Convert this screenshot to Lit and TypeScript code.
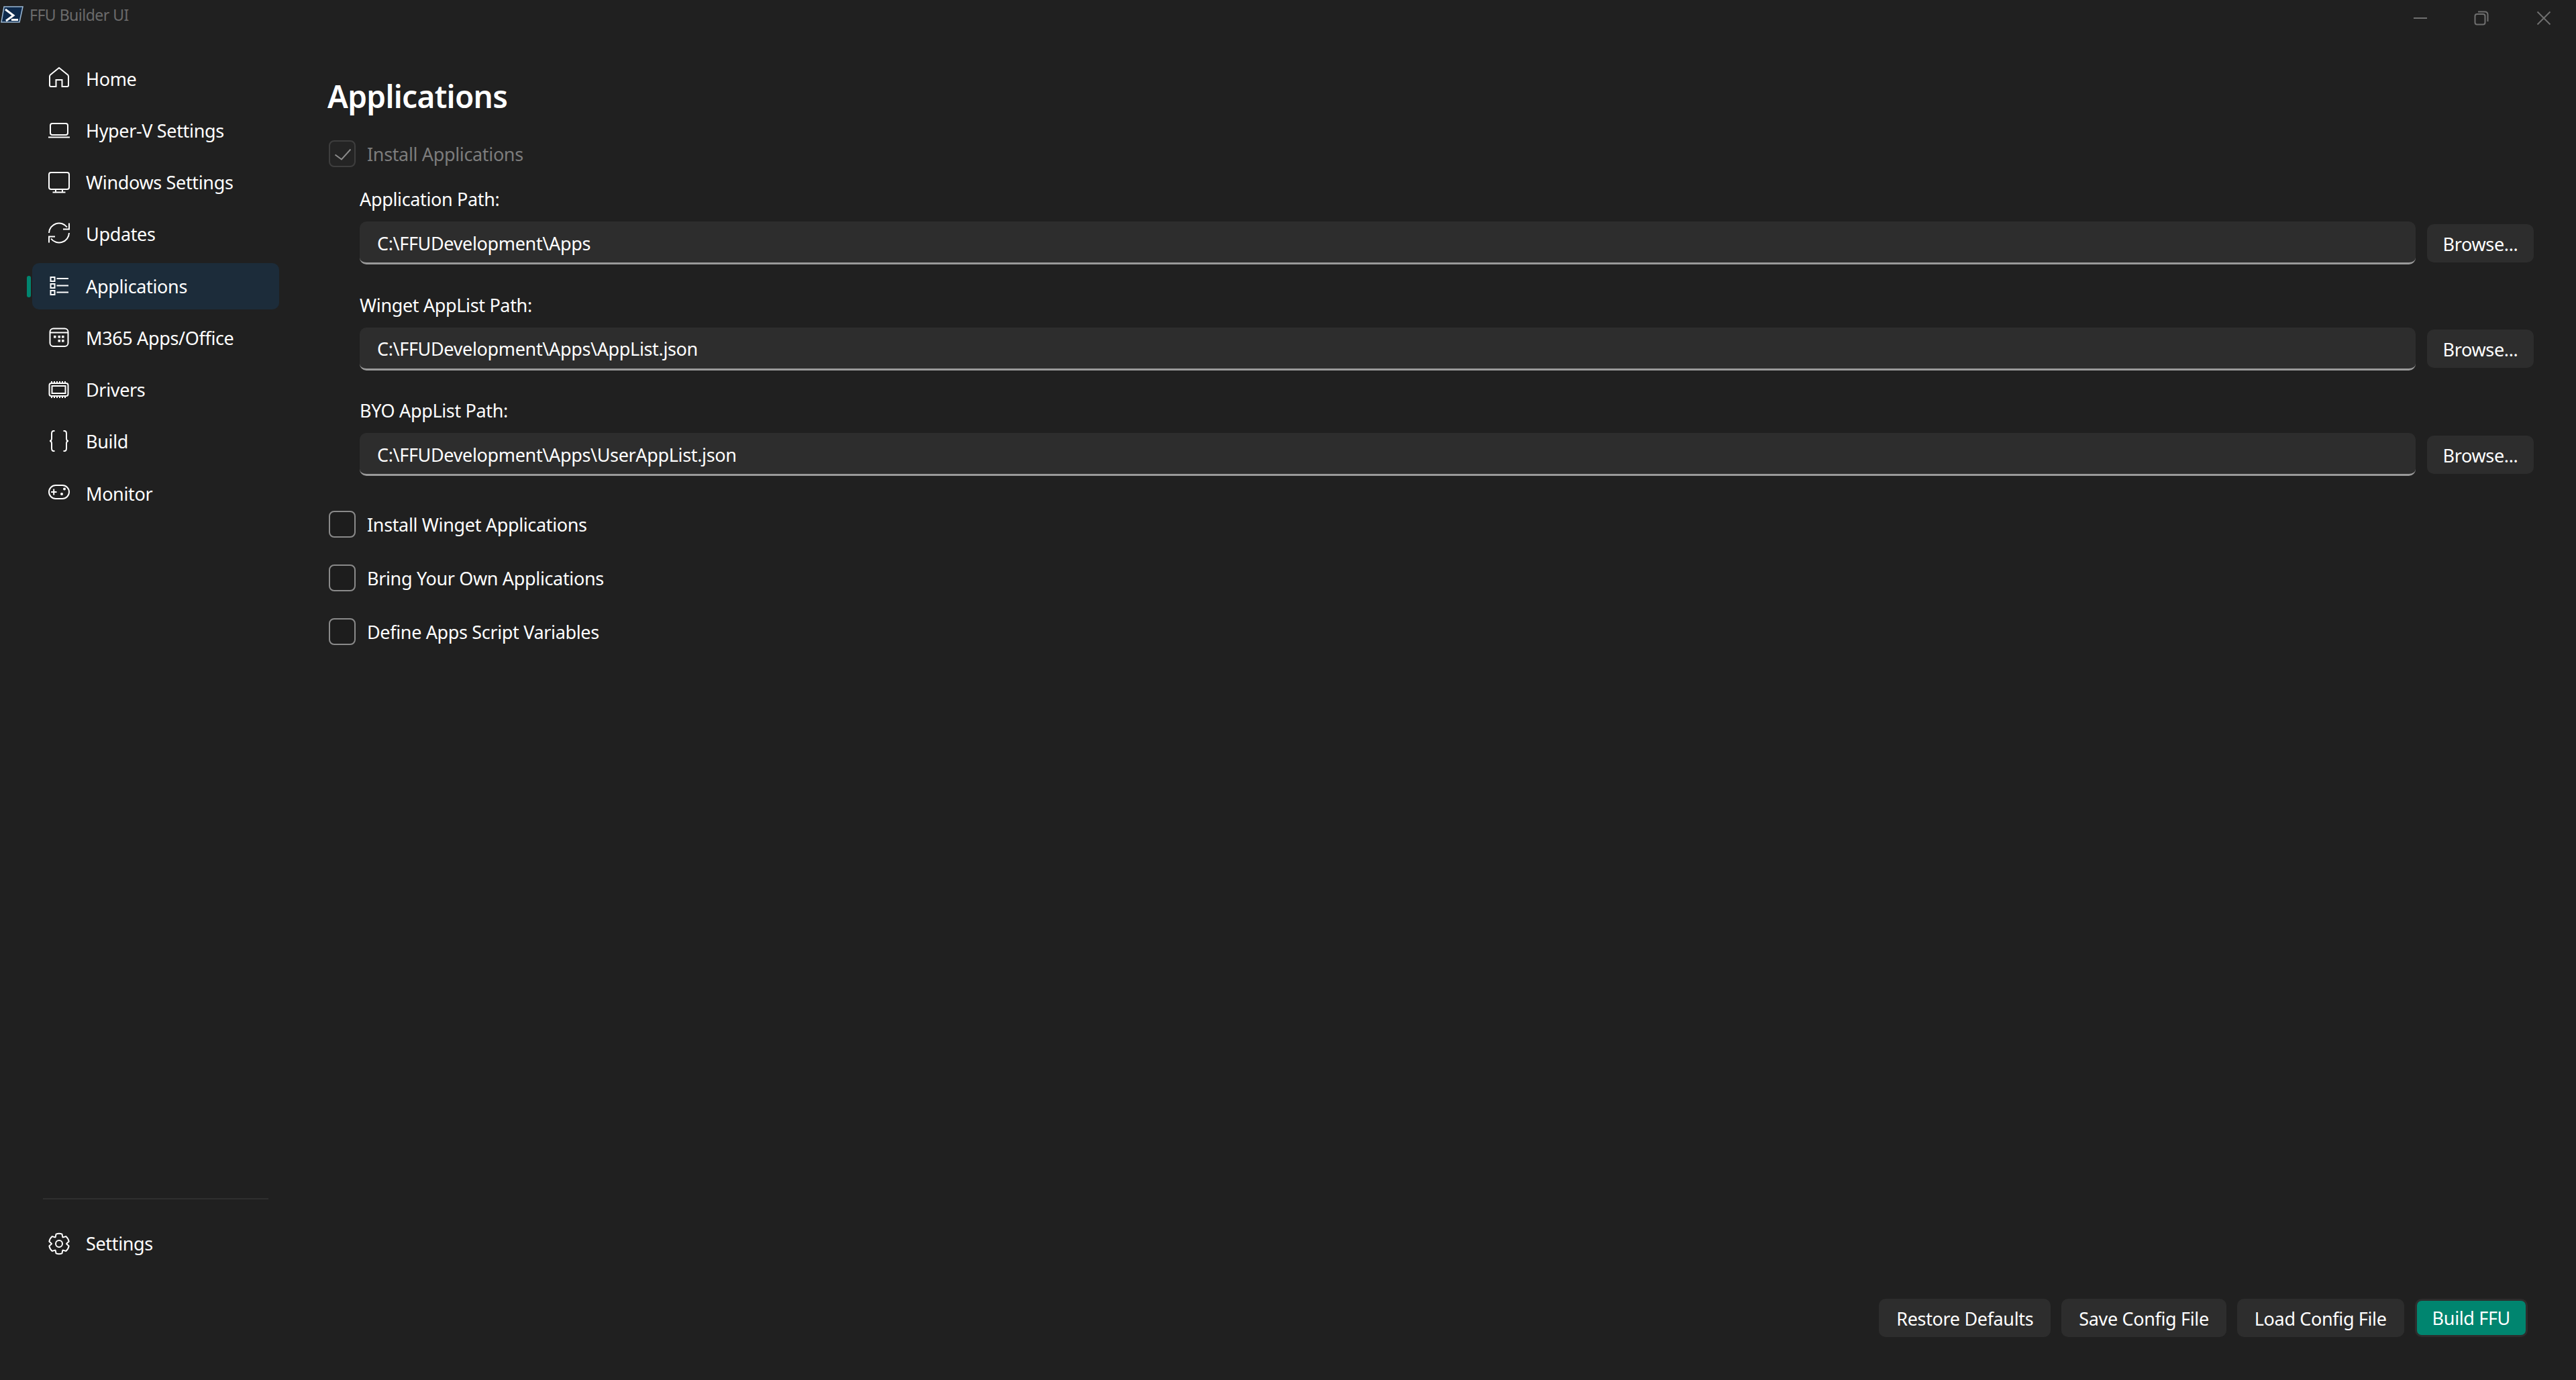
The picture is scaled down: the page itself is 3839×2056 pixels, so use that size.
import { LitElement, html, css, svg } from "lit";
import { customElement } from "lit/decorators.js";

function gearPath(cx: number, cy: number): string {
  const teeth = 6;
  const pts: string[] = [];
  const ro = 15, ri = 11.2;
  for (let i = 0; i < teeth; i++) {
    const a = (i * Math.PI * 2) / teeth - Math.PI / 2;
    const w = 0.3, v = 0.5;
    const p = (r: number, t: number) => `${(cx + r * Math.cos(t)).toFixed(2)} ${(cy + r * Math.sin(t)).toFixed(2)}`;
    pts.push(`${i === 0 ? "M" : "L"}${p(ri, a - v)}`, `L${p(ro, a - w)}`, `Q${p(ro + 1, a)} ${p(ro, a + w)}`, `L${p(ri, a + v)}`);
  }
  return pts.join(" ") + " Z";
}

const icons: Record<string, unknown> = {
  home: svg`<path d="M20 4 L7 14.5 Q6 15.4 6 17 V30 Q6 32 8 32 H15.5 V22 H24.5 V32 H32 Q34 32 34 30 V17 Q34 15.4 33 14.5 Z"/>`,
  laptop: svg`<rect x="7" y="10" width="26" height="17" rx="3"/><path d="M4 30.5 H36"/>`,
  monitor: svg`<rect x="5" y="5" width="30" height="25" rx="3"/><path d="M15 30 V34.5 M25 30 V34.5 M10.5 34.5 H29.5"/>`,
  sync: svg`<path d="M5 18 A15 15 0 0 1 32 9.5"/><path d="M35 3.5 V12.5 H26"/><path d="M35 18 A15 15 0 0 1 8 26.5"/><path d="M5 32.5 V23.5 H14"/>`,
  list: svg`<rect x="7.5" y="7" width="6" height="6"/><rect x="7.5" y="17" width="6" height="6"/><rect x="7.5" y="27" width="6" height="6"/><path d="M16.5 9 H34 M16.5 19.5 H34 M16.5 29.5 H34"/>`,
  cal: svg`<rect x="6.5" y="6.5" width="27" height="26.5" rx="5"/><path d="M6.5 12.5 H33.5"/><g fill="#fff" stroke="none"><rect x="12" y="17" width="3.5" height="3.5"/><rect x="18.5" y="17" width="3.5" height="3.5"/><rect x="24" y="17" width="3.5" height="3.5"/><rect x="18.5" y="23" width="3.5" height="3.5"/><rect x="24" y="23" width="3.5" height="3.5"/></g>`,
  chip: svg`<rect x="5.5" y="10" width="28" height="19" rx="3"/><rect x="9.5" y="14" width="20" height="11"/><path stroke-dasharray="2 2" d="M8 8 H32 M8 31 H32"/>`,
  braces: svg`<path d="M13.5 4 H12 Q9 4 9 8 V15 Q9 19 6 19 Q9 19 9 23 V30 Q9 34 12 34 H13.5"/><path d="M26.5 4 H28 Q31 4 31 8 V15 Q31 19 34 19 Q31 19 31 23 V30 Q31 34 28 34 H26.5"/>`,
  pad: svg`<rect x="5" y="8" width="30" height="20" rx="10"/><path d="M8 18 H16.5 M12.2 13.5 V22.5"/><g fill="#fff" stroke="none"><circle cx="28" cy="13.5" r="2"/><circle cx="24" cy="21" r="2"/></g>`,
  gear: svg`<path d="${gearPath(20, 20)}"/><circle cx="20" cy="20" r="5"/>`,
};

const navItems = [
  ["home", "Home"],
  ["laptop", "Hyper-V Settings"],
  ["monitor", "Windows Settings"],
  ["sync", "Updates"],
  ["list", "Applications"],
  ["cal", "M365 Apps/Office"],
  ["chip", "Drivers"],
  ["braces", "Build"],
  ["pad", "Monitor"],
];

const paths = [
  ["Application Path:", "C:\\FFUDevelopment\\Apps"],
  ["Winget AppList Path:", "C:\\FFUDevelopment\\Apps\\AppList.json"],
  ["BYO AppList Path:", "C:\\FFUDevelopment\\Apps\\UserAppList.json"],
];

const checks = ["Install Winget Applications", "Bring Your Own Applications", "Define Apps Script Variables"];

@customElement("app-root")
export class AppRoot extends LitElement {
  static styles = css`
    :host {
      display: flex;
      flex-direction: column;
      height: 100vh;
      background: #202020;
      color: #fff;
      font-family: "Noto Sans", "Open Sans", sans-serif;
      font-size: 27px;
      letter-spacing: -0.35px;
      overflow: hidden;
    }
    .titlebar { height: 50px; flex: none; display: flex; align-items: flex-start; }
    .app-icon { width: 34px; height: 28px; margin: 8px 0 0 1px; flex: none; }
    .app-title { margin: 2px 0 0 9px; font-size: 23px; line-height: 40px; color: #6b6b6b; letter-spacing: -0.5px; }
    .win { margin-left: auto; display: flex; padding: 16px 37px 0 0; gap: 71px; }
    .win svg { width: 22px; height: 22px; fill: none; stroke: #6f6f6f; stroke-width: 2; display: block; }
    .win svg:first-child { margin-right: -2px; }
    .body { flex: 1; display: flex; min-height: 0; }
    nav {
      width: 489px; flex: none; display: flex; flex-direction: column;
      padding: 32.5px 0 0 48px; box-sizing: border-box;
    }
    .items { display: flex; flex-direction: column; gap: 8.25px; }
    .item {
      position: relative; width: 368px; height: 69px; display: flex; align-items: center;
      border-radius: 10px; padding-left: 20px; box-sizing: border-box; gap: 20px; line-height: 1;
    }
    .item.sel { background: #1c2c3a; }
    .item.sel::before {
      content: ""; position: absolute; left: -8px; top: 19px; width: 6px; height: 32px;
      border-radius: 3px; background: #00856f;
    }
    .item svg { width: 40px; height: 40px; flex: none; fill: none; stroke: #fff; stroke-width: 2; }
    .foot { margin-top: auto; padding-bottom: 169px; }
    .sep { height: 2px; width: 336px; margin: 0 0 31px 16px; background: #2f2f2f; }
    main { flex: 1; min-width: 0; display: flex; flex-direction: column; padding: 59px 63px 64px 0; box-sizing: border-box; }
    h1 { margin: 0 0 32px -1px; font-size: 46px; line-height: 68px; font-weight: 600; letter-spacing: -0.7px; }
    .chk { display: flex; align-items: center; gap: 17px; height: 40px; margin-left: 1px; }
    .box {
      width: 40px; height: 40px; box-sizing: border-box; border: 2px solid #8a8a8a; border-radius: 8px;
      background: #1d1d1d; flex: none; display: flex; align-items: center; justify-content: center;
    }
    .chk.off { color: #7c7c7c; }
    .chk.off .box { border-color: #3e3e3e; background: #242424; }
    .box svg { width: 25px; height: 25px; fill: none; stroke: #8c8c8c; stroke-width: 2; }
    .paths { margin: 30px 0 0 47px; display: flex; flex-direction: column; gap: 42.5px; }
    .label { line-height: 36px; margin-bottom: 15px; }
    .row { display: flex; align-items: center; gap: 17px; }
    .input {
      flex: 1; height: 64px; box-sizing: border-box; background: #2d2d2d; border-radius: 10px;
      border-bottom: 3px solid #9a9a9a; padding: 3px 0 0 26px; display: flex; align-items: center;
    }
    .btn {
      height: 57px; box-sizing: border-box; background: #2d2d2d; border-radius: 10px; display: flex;
      align-items: center; justify-content: center; padding: 2px 26px 0; flex: none;
    }
    .browse { width: 159px; padding: 2px 0 0; }
    .list { display: flex; flex-direction: column; gap: 40px; margin-top: 52px; }
    .actions { margin-top: auto; display: flex; justify-content: flex-end; gap: 16px; padding-right: 9px; }
    .btn.primary { background: #00856f; border: 3px solid #2d2d2d; padding: 0 23px; }
  `;

  render() {
    const item = (ic: string, t: string, sel = false) => html`
      <div class="item ${sel ? "sel" : ""}">
        <svg viewBox="0 0 40 40">${icons[ic]}</svg><span>${t}</span>
      </div>`;
    return html`
      <div class="titlebar">
        <svg class="app-icon" viewBox="0 0 34 28">
          <path d="M5 2 H33 L28 25 H1 Z" fill="#0e2a4c" stroke="#9bb8d4" stroke-width="1.5"/>
          <path d="M7 6 L19 15 L8 23" fill="none" stroke="#fff" stroke-width="3"/>
          <path d="M16 21.5 H26" fill="none" stroke="#fff" stroke-width="3"/>
        </svg>
        <div class="app-title">FFU Builder UI</div>
        <div class="win">
          <svg viewBox="0 0 22 22"><path d="M1 11 H21"/></svg>
          <svg viewBox="0 0 22 22"><rect x="1.5" y="5" width="15" height="15.5" rx="3"/><path d="M6 1.5 H16 Q20.5 1.5 20.5 6 V16"/></svg>
          <svg viewBox="0 0 22 22"><path d="M1.5 1.5 L20.5 20.5 M20.5 1.5 L1.5 20.5"/></svg>
        </div>
      </div>
      <div class="body">
        <nav>
          <div class="items">${navItems.map(([i, t]) => item(i, t, t === "Applications"))}</div>
          <div class="foot">
            <div class="sep"></div>
            ${item("gear", "Settings")}
          </div>
        </nav>
        <main>
          <h1>Applications</h1>
          <div class="chk off">
            <span class="box"><svg viewBox="0 0 25 25"><path d="M1.5 13.5 L11 20.5 L24.5 5.5"/></svg></span>
            <span>Install Applications</span>
          </div>
          <div class="paths">
            ${paths.map(([l, v]) => html`
              <div>
                <div class="label">${l}</div>
                <div class="row">
                  <div class="input">${v}</div>
                  <div class="btn browse">Browse...</div>
                </div>
              </div>`)}
          </div>
          <div class="list">
            ${checks.map((c) => html`<div class="chk"><span class="box"></span><span>${c}</span></div>`)}
          </div>
          <div class="actions">
            <div class="btn">Restore Defaults</div>
            <div class="btn">Save Config File</div>
            <div class="btn">Load Config File</div>
            <div class="btn primary">Build FFU</div>
          </div>
        </main>
      </div>
    `;
  }
}
